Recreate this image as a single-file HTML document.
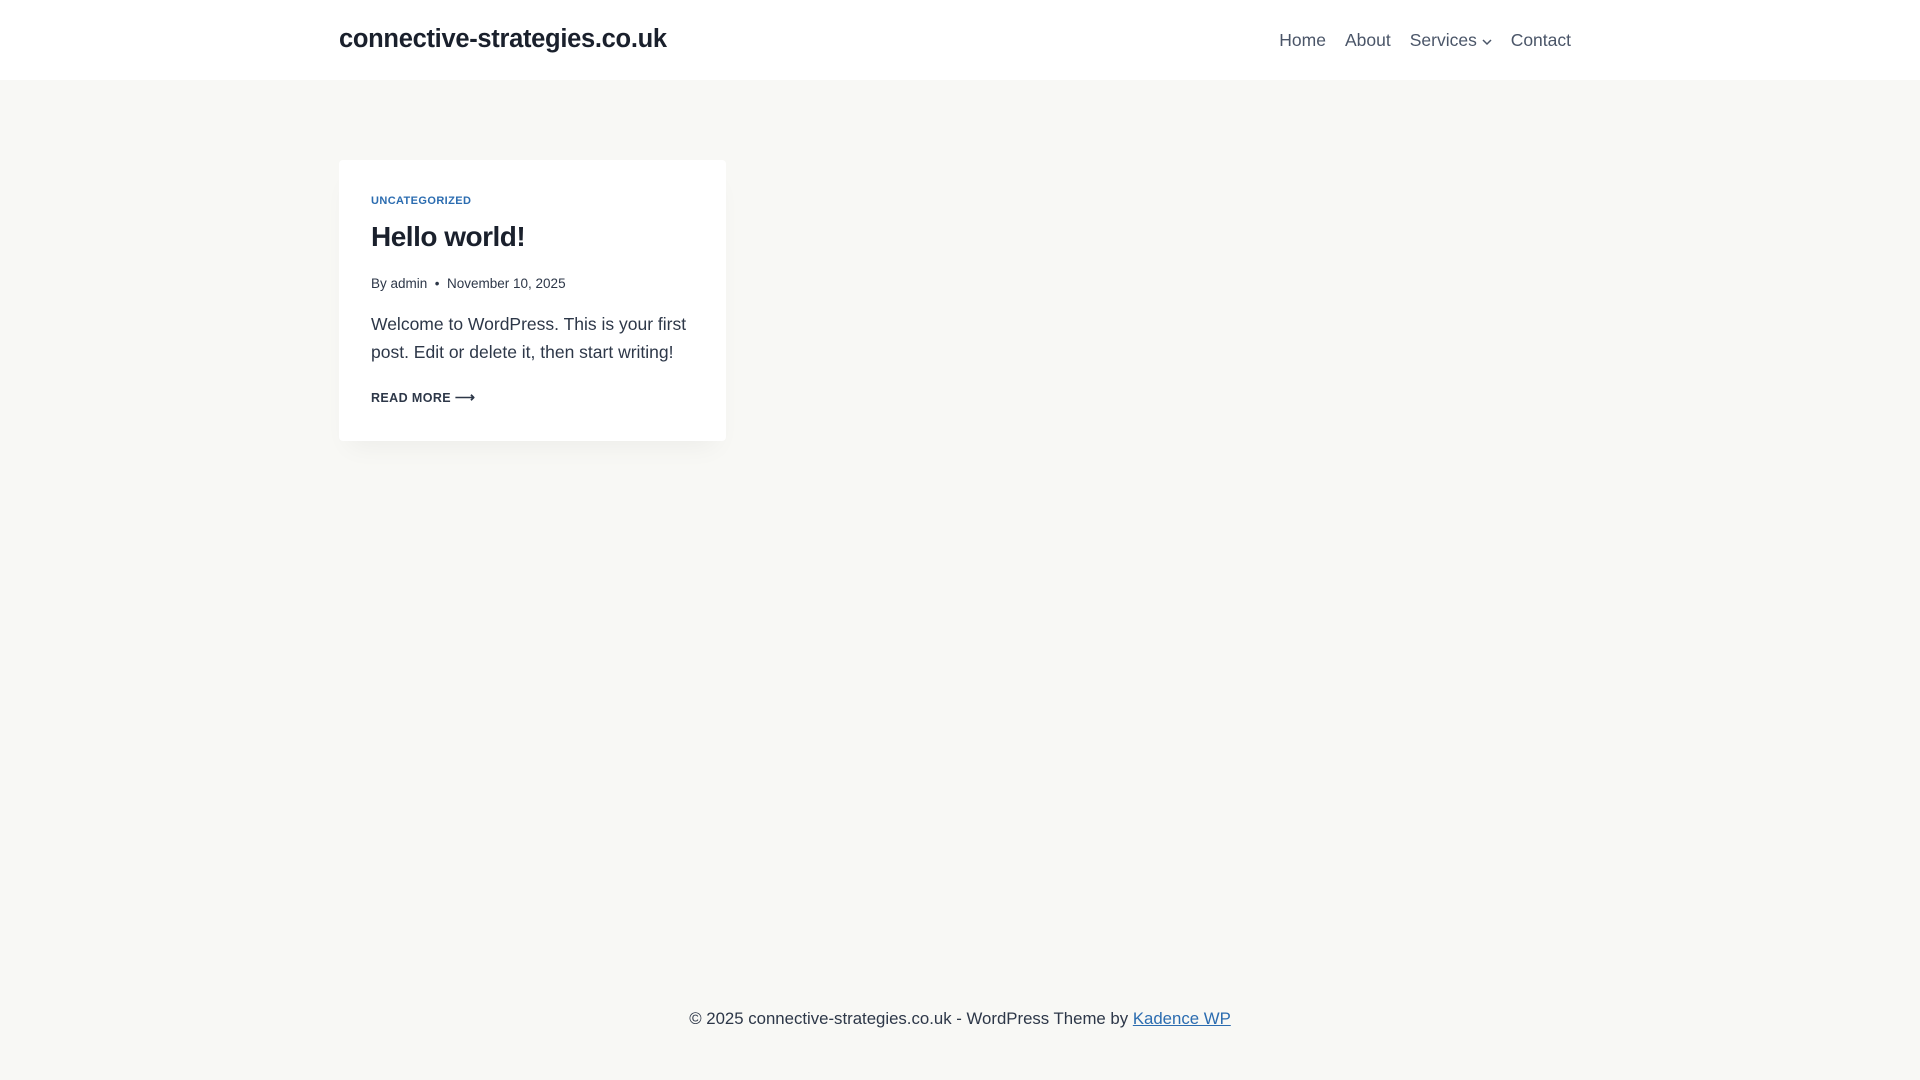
<!DOCTYPE html>
<html><head><meta charset="utf-8"><style>
*{margin:0;padding:0;box-sizing:border-box}
body{width:1920px;height:1080px;background:#f8f8f5;font-family:"Liberation Sans",sans-serif;color:#1a202c;position:relative;overflow:hidden}
header{position:absolute;left:0;top:0;width:1920px;height:80px;background:#fff}
.logo{position:absolute;left:339px;top:25px;font-size:25.5px;font-weight:bold;color:#1a202c;letter-spacing:-0.3px}
nav{position:absolute;right:349px;top:30px;font-size:17.5px;color:#4a5568}
nav span{margin-left:19px}
.card{position:absolute;left:339px;top:160px;width:387px;height:281px;background:#fff;border-radius:4px;box-shadow:0 15px 25px -10px rgba(0,0,0,0.05)}
.c{position:absolute;left:32px;white-space:nowrap}
</style></head><body>
<header><div class="logo">connective-strategies.co.uk</div>
<nav><span>Home</span><span>About</span><span>Services <svg width="10" height="8" viewBox="0 0 10 8"><path d="M1 2l4 4 4-4" stroke="#4a5568" stroke-width="1.5" fill="none"/></svg></span><span>Contact</span></nav></header>
<div class="card">
<div class="c" style="top:35px;font-size:11px;font-weight:bold;color:#2b6cb0;letter-spacing:0.4px">UNCATEGORIZED</div>
<div class="c" style="top:61px;font-size:28px;font-weight:bold;color:#1a202c;letter-spacing:-0.5px">Hello world!</div>
<div class="c" style="top:116px;font-size:13.5px;color:#2d3748">By admin &nbsp;•&nbsp; November 10, 2025</div>
<div class="c" style="top:150px;font-size:17.5px;line-height:28px;color:#2d3748;width:330px;white-space:normal">Welcome to WordPress. This is your first post. Edit or delete it, then start writing!</div>
<div class="c" style="top:229px;font-size:12.5px;font-weight:bold;letter-spacing:0.4px;color:#2d3748">READ MORE <span style="font-size:14px">⟶</span></div>
</div>
<div style="position:absolute;left:0;width:1920px;top:1009px;text-align:center;font-size:16.8px;color:#2d3748">© 2025 connective-strategies.co.uk - WordPress Theme by <span style="color:#2b6cb0;text-decoration:underline">Kadence WP</span></div>
</body></html>
